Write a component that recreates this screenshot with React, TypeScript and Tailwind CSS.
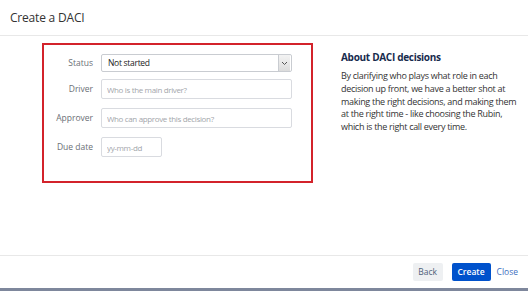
export default function App() {
  const labelCls = 'w-[49px] text-right text-[8.5px] text-[#6b6f76] shrink-0';
  const inputCls =
    'ml-[8px] h-[20px] border border-[#d9dbe0] rounded-[2px] bg-white px-[5px] text-[8px] tracking-[-0.35px] text-[#333] placeholder:text-[#a3a6ab] outline-none';

  return (
    <div
      className="w-[528px] h-[291px] bg-white flex flex-col overflow-hidden"
      style={{ fontFamily: '"Open Sans", "Noto Sans", sans-serif' }}
    >
      {/* header */}
      <div className="h-[36px] shrink-0 border-b border-[#e8e8e8] flex items-center pl-[10px]">
        <h1 className="text-[12px] text-[#333] tracking-[-0.2px]">Create a DACI</h1>
      </div>

      {/* body */}
      <div className="flex-1 flex">
        <div className="ml-[42px] mt-[7px] w-[271px] h-[140px] border-2 border-[#d3232b] pt-[9px]">
          <div className="flex items-center">
            <span className={labelCls}>Status</span>
            <div className="ml-[8px] w-[191px] h-[18px] border border-[#c9ccd1] rounded-[2px] flex items-center justify-between bg-white">
              <span className="pl-[6px] text-[8.5px] tracking-[-0.3px] text-[#222]">Not started</span>
              <div className="w-[12px] h-[16px] mr-px border-l border-[#c9ccd1] bg-gradient-to-b from-[#f3f3f3] to-[#dcdcdc] flex items-center justify-center">
                <svg width="7" height="5" viewBox="0 0 7 5" fill="none">
                  <path d="M1 1l2.5 2.5L6 1" stroke="#555" strokeWidth="1" />
                </svg>
              </div>
            </div>
          </div>

          <div className="flex items-center mt-[7px]">
            <span className={labelCls}>Driver</span>
            <input className={`${inputCls} w-[191px]`} placeholder="Who is the main driver?" />
          </div>

          <div className="flex items-center mt-[9px]">
            <span className={labelCls}>Approver</span>
            <input className={`${inputCls} w-[191px]`} placeholder="Who can approve this decision?" />
          </div>

          <div className="flex items-center mt-[9px]">
            <span className={labelCls}>Due date</span>
            <input className={`${inputCls} w-[61px]`} placeholder="yy-mm-dd" />
          </div>
        </div>

        <div className="ml-[28px] mt-[14px] w-[184px]">
          <h2 className="text-[10px] font-bold text-[#172b4d] tracking-[-0.3px]">About DACI decisions</h2>
          <p className="mt-[5px] text-[9px] leading-[12.75px] text-[#333] tracking-[-0.3px] whitespace-nowrap">
            By clarifying who plays what role in each
            <br />
            decision up front, we have a better shot at
            <br />
            making the right decisions, and making them
            <br />
            at the right time - like choosing the Rubin,
            <br />
            which is the right call every time.
          </p>
        </div>
      </div>

      {/* footer */}
      <div className="h-[33px] shrink-0 border-t border-[#e8e8e8] flex items-center justify-end pr-[10px]">
        <button className="h-[18px] w-[30px] rounded-[2px] bg-[#eef0f2] text-[8.5px] text-[#505f79]">Back</button>
        <button className="ml-[9px] h-[18px] w-[39px] rounded-[2px] bg-[#0052cc] text-[8.5px] text-white font-semibold">
          Create
        </button>
        <button className="ml-[6px] text-[8.5px] text-[#3e6fc0]">Close</button>
      </div>
      <div className="h-[3px] shrink-0 bg-[#7e879c]" />
    </div>
  );
}
